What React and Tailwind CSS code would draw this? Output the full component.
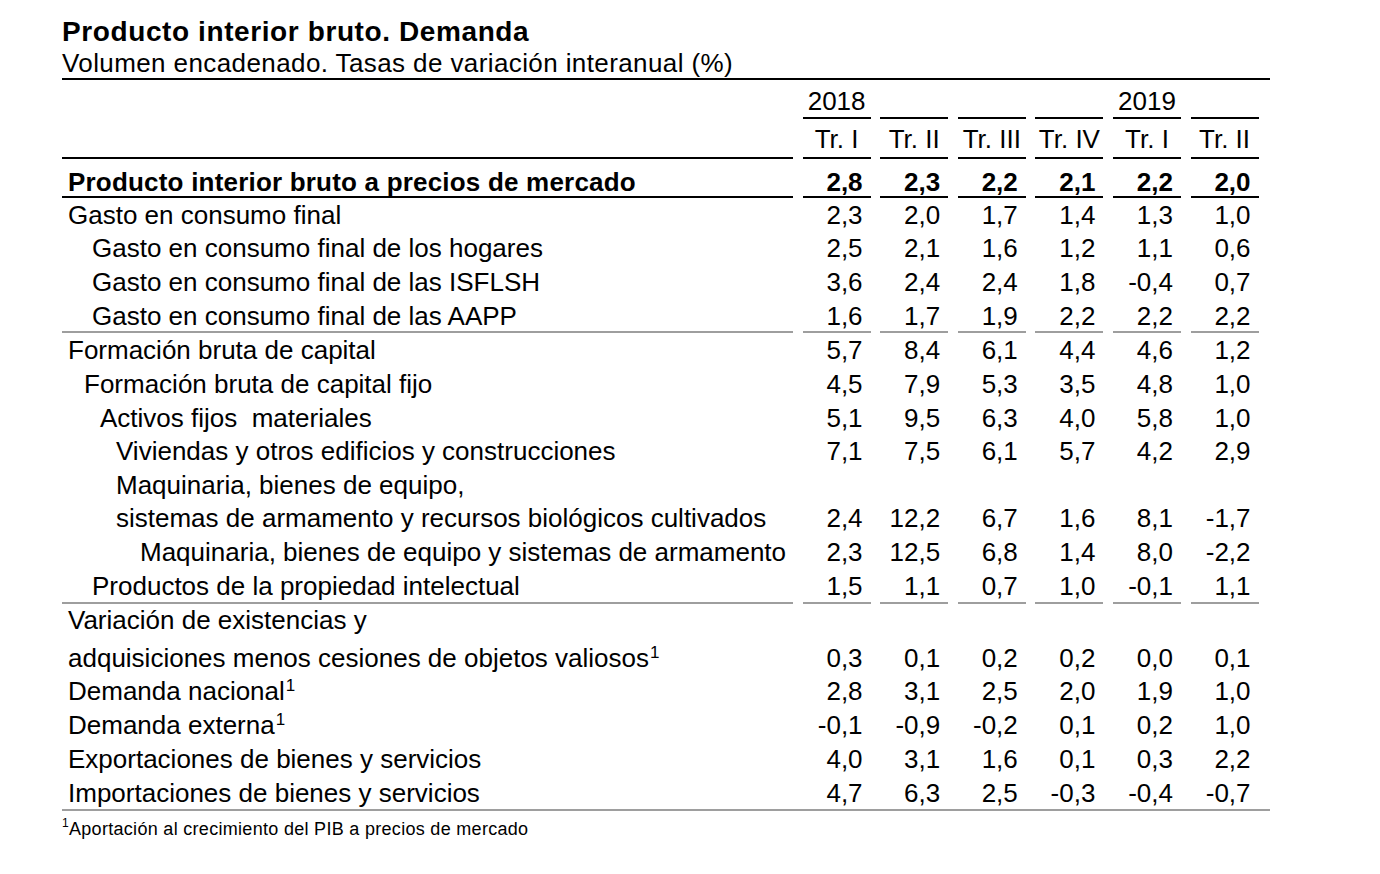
const grid = "grid grid-cols-[731px_repeat(6,68px)] gap-x-[9.6px]"

// separator under the rows: segmented per column, like the source table
const Rule = ({ color, label = true }) => (
    <div className={`${grid} h-[2px]`}>
        <div className={label ? color : ""} />
        {[0, 1, 2, 3, 4, 5].map((i) => (
            <div key={i} className={color} />
        ))}
    </div>
)

const Sup = () => <span className="relative -top-[9px] ml-[1px] text-[17px]">1</span>

const Row = ({ label, pad, values, h, pt = "", bold = false }) => (
    <div className={`${grid} items-center ${h} ${pt}`}>
        <div className={`${pad} whitespace-pre ${bold ? "font-bold tracking-[0.2px]" : ""}`}>{label}</div>
        {values &&
            values.map((v, i) => (
                <div key={i} className={`text-right pr-[8px] ${bold ? "font-bold" : ""}`}>
                    {v}
                </div>
            ))}
    </div>
)

const BLACK = "bg-black"
const GRAY = "bg-[#9e9e9e]"

export default function App() {
    return (
        <div className="min-h-[874px] bg-white text-black font-['Liberation_Sans',Arial,sans-serif] text-[26px] leading-none">
            <div className="ml-[62px] w-[1208px] pt-[16px]">
                <div className="h-[32px] leading-[32px] text-[28px] font-bold tracking-[0.6px]">
                    Producto interior bruto. Demanda
                </div>
                <div className="h-[30px] leading-[30px] tracking-[0.4px]">
                    Volumen encadenado. Tasas de variación interanual (%)
                </div>
                <div className="h-[2px] bg-black" />

                {/* cabecera */}
                <div className={`${grid} items-center h-[37px] pt-[5px]`}>
                    <div />
                    <div className="text-center">2018</div>
                    <div />
                    <div />
                    <div />
                    <div className="text-center">2019</div>
                    <div />
                </div>
                <Rule color={BLACK} label={false} />
                <div className={`${grid} items-center h-[38px] pt-[2px]`}>
                    <div />
                    {["Tr. I", "Tr. II", "Tr. III", "Tr. IV", "Tr. I", "Tr. II"].map((t, i) => (
                        <div key={i} className="text-center whitespace-nowrap">
                            {t}
                        </div>
                    ))}
                </div>
                <Rule color={BLACK} />

                <Row
                    label="Producto interior bruto a precios de mercado"
                    pad="pl-[6px]"
                    values={["2,8", "2,3", "2,2", "2,1", "2,2", "2,0"]}
                    h="h-[37px]"
                    pt="pt-[9px]"
                    bold
                />
                <Rule color={BLACK} />

                <Row label="Gasto en consumo final" pad="pl-[6px]" values={["2,3", "2,0", "1,7", "1,4", "1,3", "1,0"]} h="h-[33px]" />
                <Row label="Gasto en consumo final de los hogares" pad="pl-[30px]" values={["2,5", "2,1", "1,6", "1,2", "1,1", "0,6"]} h="h-[34px]" />
                <Row label="Gasto en consumo final de las ISFLSH" pad="pl-[30px]" values={["3,6", "2,4", "2,4", "1,8", "-0,4", "0,7"]} h="h-[34px]" />
                <Row label="Gasto en consumo final de las AAPP" pad="pl-[30px]" values={["1,6", "1,7", "1,9", "2,2", "2,2", "2,2"]} h="h-[32px]" pt="pt-[1px]" />
                <Rule color={GRAY} />

                <Row label="Formación bruta de capital" pad="pl-[6px]" values={["5,7", "8,4", "6,1", "4,4", "4,6", "1,2"]} h="h-[34px]" />
                <Row label="Formación bruta de capital fijo" pad="pl-[22px]" values={["4,5", "7,9", "5,3", "3,5", "4,8", "1,0"]} h="h-[34px]" />
                <Row label="Activos fijos  materiales" pad="pl-[38px]" values={["5,1", "9,5", "6,3", "4,0", "5,8", "1,0"]} h="h-[33px]" />
                <Row label="Viviendas y otros edificios y construcciones" pad="pl-[54px]" values={["7,1", "7,5", "6,1", "5,7", "4,2", "2,9"]} h="h-[34px]" />
                <Row label="Maquinaria, bienes de equipo," pad="pl-[54px]" h="h-[33px]" />
                <Row label="sistemas de armamento y recursos biológicos cultivados" pad="pl-[54px]" values={["2,4", "12,2", "6,7", "1,6", "8,1", "-1,7"]} h="h-[34px]" />
                <Row label="Maquinaria, bienes de equipo y sistemas de armamento" pad="pl-[78px]" values={["2,3", "12,5", "6,8", "1,4", "8,0", "-2,2"]} h="h-[34px]" />
                <Row label="Productos de la propiedad intelectual" pad="pl-[30px]" values={["1,5", "1,1", "0,7", "1,0", "-0,1", "1,1"]} h="h-[33px]" pt="pt-[1px]" />
                <Rule color={GRAY} />

                <Row label="Variación de existencias y" pad="pl-[6px]" h="h-[32px]" />
                <Row
                    label={<>adquisiciones menos cesiones de objetos valiosos<Sup /></>}
                    pad="pl-[6px]"
                    values={["0,3", "0,1", "0,2", "0,2", "0,0", "0,1"]}
                    h="h-[38px]"
                    pt="pt-[6px]"
                />
                <Row label={<>Demanda nacional<Sup /></>} pad="pl-[6px]" values={["2,8", "3,1", "2,5", "2,0", "1,9", "1,0"]} h="h-[34px]" />
                <Row label={<>Demanda externa<Sup /></>} pad="pl-[6px]" values={["-0,1", "-0,9", "-0,2", "0,1", "0,2", "1,0"]} h="h-[34px]" />
                <Row label="Exportaciones de bienes y servicios" pad="pl-[6px]" values={["4,0", "3,1", "1,6", "0,1", "0,3", "2,2"]} h="h-[34px]" />
                <Row label="Importaciones de bienes y servicios" pad="pl-[6px]" values={["4,7", "6,3", "2,5", "-0,3", "-0,4", "-0,7"]} h="h-[33px]" />
                <div className="h-[2px] bg-[#9e9e9e]" />

                <div className="flex h-[35px] items-center text-[18px] tracking-[0.3px]">
                    <span className="relative -top-[6px] text-[12px]">1</span>
                    Aportación al crecimiento del PIB a precios de mercado
                </div>
            </div>
        </div>
    )
}
